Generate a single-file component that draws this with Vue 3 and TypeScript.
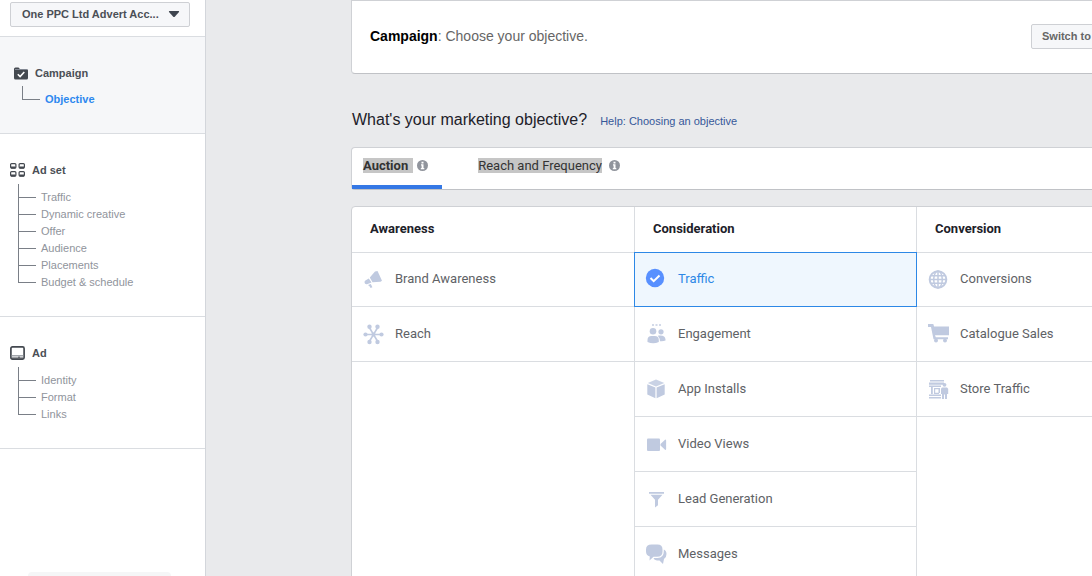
<script setup lang="ts">
import { ref } from 'vue'

interface Step {
  name: string
  icon: string
  items: string[]
}

interface Column {
  title: string
  items: { name: string; icon: string }[]
}

const account = ref('One PPC Ltd Advert Acc...')
const selected = ref('Traffic')
const buying = ref('Auction')

const steps: Step[] = [
  { name: 'Campaign', icon: 'folder', items: ['Objective'] },
  { name: 'Ad set', icon: 'grid', items: ['Traffic', 'Dynamic creative', 'Offer', 'Audience', 'Placements', 'Budget & schedule'] },
  { name: 'Ad', icon: 'screen', items: ['Identity', 'Format', 'Links'] }
]

const tabs = ['Auction', 'Reach and Frequency']

const columns: Column[] = [
  {
    title: 'Awareness',
    items: [
      { name: 'Brand Awareness', icon: 'horn' },
      { name: 'Reach', icon: 'reach' }
    ]
  },
  {
    title: 'Consideration',
    items: [
      { name: 'Traffic', icon: 'cursor' },
      { name: 'Engagement', icon: 'people' },
      { name: 'App Installs', icon: 'box' },
      { name: 'Video Views', icon: 'video' },
      { name: 'Lead Generation', icon: 'funnel' },
      { name: 'Messages', icon: 'chat' }
    ]
  },
  {
    title: 'Conversion',
    items: [
      { name: 'Conversions', icon: 'globe' },
      { name: 'Catalogue Sales', icon: 'cart' },
      { name: 'Store Traffic', icon: 'store' }
    ]
  }
]
</script>

<template>
  <div class="page">
    <aside class="sidebar">
      <div class="account">
        <select v-model="account" aria-label="Advert account">
          <option>One PPC Ltd Advert Acc...</option>
        </select>
        <svg class="caret" width="12" height="7" viewBox="0 0 12 7"><path d="M1.500 0h9q1 0 .5 1L7 5.500q-1 1-2 0L1 1Q.5 0 1.500 0z" fill="#3f454f" /></svg>
      </div>
      <nav>
        <section v-for="(step, i) in steps" :key="step.name" class="step" :class="{ current: i === 0 }">
          <h2>
            <svg v-if="step.icon === 'folder'" width="14" height="13" viewBox="0 0 14 13">
              <path d="M0 2Q0 .5 1.500.5H4.500L6 2h6.500Q14 2 14 3.500V11q0 1.500-1.500 1.500h-11Q0 12.500 0 11z" fill="#444950" />
              <path d="M1 2.500h12" stroke="#9197a3" stroke-width=".8" />
              <path d="M3.800 7.200l2.300 2.300 4.200-4.500" fill="none" stroke="#fff" stroke-width="1.600" />
            </svg>
            <svg v-else-if="step.icon === 'grid'" width="15" height="14" viewBox="0 0 15 14" fill="#fff" stroke="#444950" stroke-width="1.200">
              <rect x=".6" y=".6" width="5.300" height="4.500" rx="1" /><rect x="9.100" y=".6" width="5.300" height="4.500" rx="1" />
              <rect x=".6" y="8.600" width="5.300" height="4.500" rx="1" /><rect x="9.100" y="8.600" width="5.300" height="4.500" rx="1" />
              <path d="M1 4.500h4.500M9.500 4.500H14M1 12.500h4.500M9.500 12.500H14" stroke-width="2" />
            </svg>
            <svg v-else width="15" height="14" viewBox="0 0 15 14">
              <rect x=".9" y=".9" width="13.200" height="12.200" rx="1.500" fill="#fff" stroke="#444950" stroke-width="1.700" />
              <path d="M1.500 9.800h12" stroke="#8a8f97" stroke-width="1.200" /><path d="M2 12h11M9 10.500V12" stroke="#444950" stroke-width="1.200" />
            </svg>
            <span>{{ step.name }}</span>
          </h2>
          <ul>
            <li v-for="item in step.items" :key="item"><a href="#">{{ item }}</a></li>
          </ul>
        </section>
      </nav>
      <div class="drawer"></div>
    </aside>

    <main class="main">
      <header class="panel intro">
        <p><strong>Campaign</strong>: Choose your objective.</p>
        <button type="button" class="switch">Switch to</button>
      </header>

      <div class="question">
        <h1>What's your marketing objective?</h1>
        <a href="#">Help: Choosing an objective</a>
      </div>

      <div class="panel tabs">
        <button v-for="tab in tabs" :key="tab" type="button" class="tab" :class="{ active: tab === buying }" @click="buying = tab">
          <span class="mark">{{ tab }}</span>
          <svg width="11" height="11" viewBox="0 0 11 11">
            <circle cx="5.500" cy="5.500" r="5.500" fill="#90949c" />
            <path d="M4.500 1.800h2v1.700h-2zM4 4.300h2.500V8H7.300v1.200H3.800V8h.8V5.500H4z" fill="#fff" />
          </svg>
        </button>
      </div>

      <div class="panel board">
        <section v-for="column in columns" :key="column.title" class="column">
          <h3>{{ column.title }}</h3>
          <button
            v-for="item in column.items"
            :key="item.name"
            type="button"
            class="objective"
            :class="{ selected: item.name === selected }"
            @click="selected = item.name"
          >
            <svg width="22" height="22" viewBox="0 0 22 22" fill="#c0cae0" stroke="none">
              <template v-if="item.name === selected">
                <circle cx="10" cy="10" r="9.200" fill="#5890ff" />
                <path d="M5.500 10l3.200 3.200 5.800-5.700" fill="none" stroke="#fff" stroke-width="2" />
              </template>
              <template v-else-if="item.icon === 'horn'">
                <path d="M13 3.500L15.500 3 20 12.800 18.500 13.800 10.500 14.300 7.800 9.500z" />
                <path d="M6.800 10.500L9.500 14.500 5 16.300Q2.500 16.500 2.500 14.300 2.500 12.800 3.800 12.300zM6 17l2.800-1.100 1.600 3.300-1.800.8L7.500 18.300z" />
              </template>
              <template v-else-if="item.icon === 'reach'">
                <path d="M3 11.500h17M7 4l9 15M16 4l-9 15" stroke="#c0cae0" stroke-width="1.600" />
                <circle cx="3.500" cy="11.500" r="2.100" /><circle cx="19.500" cy="11.500" r="2.100" /><circle cx="7.500" cy="3.800" r="2.200" /><circle cx="15.500" cy="3.800" r="2.200" /><circle cx="7.500" cy="19" r="2.200" /><circle cx="15.500" cy="19" r="2.200" /><circle cx="11.500" cy="11.500" r="2" />
              </template>
              <template v-else-if="item.icon === 'cursor'"><path d="M5 2l12 10-6 1-3 6z" /></template>
              <template v-else-if="item.icon === 'people'">
                <path d="M7 1h2v2H7zM10.500 1h2v2h-2zM14 1h2v2h-2z" opacity=".7" />
                <circle cx="8" cy="8.300" r="3.300" /><circle cx="16" cy="8.800" r="2.600" />
                <path d="M2.500 19v-2q0-4 4-4h3.300q4 0 4 4v2q-5.600 2.500-11.300 0zM13.200 12.600q7-1 7.300 4v1q-2.500 1-5.500.6 0-3-1.800-4.600z" />
              </template>
              <template v-else-if="item.icon === 'box'">
                <path d="M11 1.500l8.300 3.500L11 8.500 2.800 5z" opacity=".85" /><path d="M2.300 6.200L10.400 9.600v10.700L2.300 16.500z" /><path d="M19.700 6.200L11.600 9.600v10.700l8.100-3.800z" />
              </template>
              <template v-else-if="item.icon === 'video'"><rect x="2" y="5.500" width="13" height="12.500" rx="1" /><path d="M15.500 11l4.800-4.500q.8 0 .8 1v8.500q0 1-.8 1l-4.800-4.500z" /></template>
              <template v-else-if="item.icon === 'funnel'"><path d="M4 4h15v1.800H4zM5.500 6.800h12l-4.500 5v5.500L10 19.500v-7.700z" /></template>
              <template v-else-if="item.icon === 'chat'">
                <path d="M6.500 1.500h6q5 0 5 5v2.300q0 5-5.500 5H8.500L4.500 17.500l.3-4Q1 12.500 1 8.500v-2q0-5 5.500-5z" />
                <path d="M18.800 6.500q2.700 1 2.700 4.500 0 3.500-2.500 5l-1 5-3.500-3.500H12Q9 17.300 8.500 15h4q6.500-.5 6.300-7z" />
              </template>
              <template v-else-if="item.icon === 'globe'">
                <g fill="none" stroke="#c0cae0" stroke-width="1.500"><circle cx="11" cy="11.500" r="8.300" stroke-width="2" /><ellipse cx="11" cy="11.500" rx="4.300" ry="8.500" /><path d="M11 3v17M4 7.700h14M2.500 11.500h17M4 15.300h14" /></g>
              </template>
              <template v-else-if="item.icon === 'cart'">
                <path d="M1 1h5.300l.8 2.500H22v8.800H8l.8 2H21v2H6.500L4 4H1z" /><circle cx="9" cy="17.500" r="2" /><circle cx="18" cy="17.500" r="2" />
              </template>
              <template v-else>
                <path d="M3 2h14v1.500H3zM2 4.500h15v2.200H2zM2 7.500h12V9H2zM4 9h1.800v7H4zM7 10h6v1.200H8.200v3.500H12V16H7zM11.500 11H13v4h-1.500zM2 16.500h12V18H2zM2 19h12v1.500H2z" />
                <circle cx="17.500" cy="6.800" r="1.900" /><path d="M15 9.500h5l1.200 1.200V16H20v5h-2v-4.500h-1V21h-2v-5h-1v-5.300z" />
              </template>
            </svg>
            <span>{{ item.name }}</span>
          </button>
        </section>
      </div>
    </main>
  </div>
</template>

<style>
body {
  margin: 0;
  background: #e9eaec;
}
</style>

<style scoped>
.page {
  display: flex;
  height: 100vh;
  overflow: hidden;
  background: #e9eaec;
  font-family: "Liberation Sans", Arial, sans-serif;
  font-size: 11px;
  color: #4b4f56;
}
h1, h2, h3, p, ul {
  margin: 0;
  padding: 0;
}
a {
  color: inherit;
  text-decoration: none;
}
button, select {
  font: inherit;
  color: inherit;
}
.sidebar {
  box-sizing: border-box;
  flex: 0 0 206px;
  display: flex;
  flex-direction: column;
  background: #fff;
  border-right: 1px solid #d3d6db;
}
.account {
  display: grid;
  align-items: center;
  padding: 2px 15px 9px 10px;
  border-bottom: 1px solid #dadde1;
}
.account select {
  box-sizing: border-box;
  grid-area: 1 / 1;
  width: 100%;
  height: 25px;
  padding: 0 28px 2px 11px;
  appearance: none;
  background: #f6f7f9;
  border: 1px solid #ced0d4;
  border-radius: 2px;
  font-weight: bold;
}
.caret {
  grid-area: 1 / 1;
  justify-self: end;
  margin-right: 10px;
  pointer-events: none;
}
.step {
  padding: 28px 10px 25px;
  border-bottom: 1px solid #dadde1;
}
.step h2 {
  display: flex;
  align-items: center;
  gap: 7px;
  height: 16px;
  font-size: 11px;
}
.step ul {
  padding: 11px 0 0 8px;
  list-style: none;
}
.step li {
  display: flex;
  align-items: flex-end;
  gap: 5px;
  height: 17px;
  line-height: 17px;
  color: #90949c;
}
.step li::before {
  content: "";
  box-sizing: border-box;
  width: 18px;
  height: 18px;
  margin-bottom: 8px;
  border: solid #7a7f87;
  border-width: 0 0 1px 1px;
}
.step li:first-child::before {
  height: 14px;
}
.current {
  padding: 28px 14px 25px;
  background: #f6f7f9;
}
.current ul {
  padding-top: 10px;
}
.current li {
  font-weight: bold;
  color: #2d88ef;
}
.drawer {
  height: 4px;
  margin: auto 34px 0 28px;
  background: #f5f6f7;
  border-radius: 4px 4px 0 0;
}
.main {
  flex: 1;
  min-width: 0;
  padding-left: 145px;
  overflow: hidden;
}
.panel {
  box-sizing: border-box;
  width: 848px;
  background: #fff;
  border: 1px solid #cfd1d5;
  border-radius: 4px;
}
.intro {
  display: flex;
  align-items: center;
  justify-content: space-between;
  height: 74px;
  padding: 0 10px 2px 18px;
  border-radius: 0 0 4px 4px;
  border-bottom-color: #c0c2c6;
  font-size: 14px;
  color: #666;
}
.intro strong {
  color: #000;
}
.switch {
  width: 157px;
  height: 25px;
  padding: 0 10px;
  background: #f6f7f9;
  border: 1px solid #ced0d4;
  border-radius: 2px;
  font-size: 11px;
  font-weight: bold;
  text-align: left;
}
.question {
  display: flex;
  align-items: baseline;
  gap: 13px;
  padding: 36px 0 18px 1px;
}
.question h1 {
  font-size: 16px;
  line-height: 19px;
  font-weight: normal;
  color: #1d2129;
}
.question a {
  color: #365899;
}
.tabs {
  display: flex;
  gap: 25px;
  height: 43px;
  border-bottom-color: #c0c2c6;
}
.tab {
  display: flex;
  align-items: center;
  gap: 7px;
  padding: 0 14px 2px 11px;
  background: none;
  border: 0;
  border-bottom: 4px solid transparent;
  font-family: Roboto, "Liberation Sans", sans-serif;
  font-size: 13px;
  color: #333;
}
.tab.active {
  gap: 4px;
  border-color: #3578e5;
  font-weight: bold;
}
.mark {
  line-height: 15px;
  background: #c6c6c6;
}
.active .mark {
  padding-right: 5px;
}
.board {
  display: grid;
  grid-template-columns: repeat(3, 1fr);
  height: 600px;
  margin-top: 16px;
  font-family: Roboto, "Liberation Sans", sans-serif;
  font-size: 13px;
}
.column + .column {
  border-left: 1px solid #dadde1;
}
.column h3 {
  padding: 13px 18px 15px;
  border-bottom: 1px solid #dadde1;
  font-size: 13px;
  line-height: 17px;
  color: #1d2129;
}
.objective {
  box-sizing: border-box;
  display: flex;
  align-items: center;
  gap: 11px;
  width: 100%;
  height: 55px;
  padding: 0 10px 1px;
  background: none;
  border: 0;
  border-bottom: 1px solid #dadde1;
  color: #606266;
}
h3 + .objective {
  height: 54px;
  padding-bottom: 2px;
}
.objective.selected {
  position: relative;
  width: calc(100% + 2px);
  height: 55px;
  margin: -1px -1px 0;
  background: #eff7fe;
  border: 1px solid #2d88e6;
  color: #2d88e6;
}
</style>
